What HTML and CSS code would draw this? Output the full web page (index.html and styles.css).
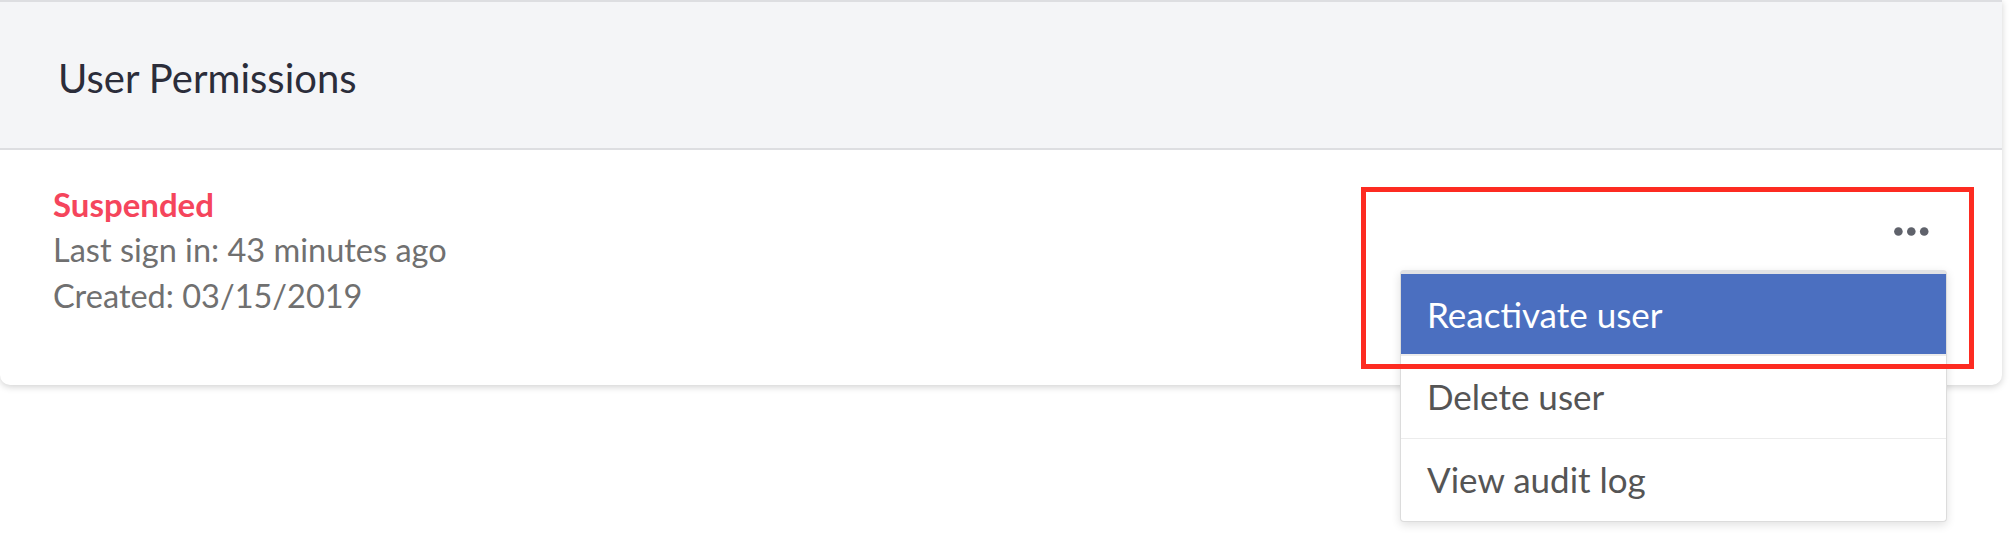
FILE: index.html
```html
<!DOCTYPE html>
<html lang="en">
<head>
    <meta charset="UTF-8">
    <meta name="viewport" content="width=device-width, initial-scale=1.0">
    <title>User Permissions</title>
    <link rel="stylesheet" href="styles.css">
</head>
<body>

    <div class="card">
        <div class="card-header">
            <h2>User Permissions</h2>
        </div>
        <div class="card-body">
            <div class="user-status">
                <div class="status-suspended">Suspended</div>
                <div class="meta">Last sign in: 43 minutes ago</div>
                <div class="meta">Created: 03/15/2019</div>
            </div>
            <div class="actions">
                <button class="more-btn" type="button" aria-label="More actions">
                    <svg width="35" height="9" viewBox="0 0 35 9">
                        <circle cx="4.4" cy="4.5" r="4.3" fill="#5f626b"/>
                        <circle cx="17.3" cy="4.5" r="4.3" fill="#5f626b"/>
                        <circle cx="30.2" cy="4.5" r="4.3" fill="#5f626b"/>
                    </svg>
                </button>
                <ul class="dropdown">
                    <li class="dropdown-item active">Reactivate user</li>
                    <li class="dropdown-item">Delete user</li>
                    <li class="dropdown-item">View audit log</li>
                </ul>
                <!-- annotation box around the toggle and first item -->
                <div class="highlight"></div>
            </div>
        </div>
    </div>

</body>
</html>
```

FILE: styles.css
```css
html {
    height: 100%;
}
body {
    font-family: Lato, "Open Sans", sans-serif;
    margin: 0;
    padding: 0;
    min-height: 540px;
    background-color: #ffffff;
}
.card {
    position: relative;
    width: 2002px;
    background-color: #ffffff;
    border-radius: 0 0 10px 10px;
    box-shadow: 0 2px 7px rgba(0, 0, 0, 0.18);
}
.card-header {
    background-color: #f4f5f7;
    border-top: 2px solid #dddee1;
    border-bottom: 2px solid #dddee1;
    padding: 52px 55px 46px 58px;
}
.card-header h2 {
    margin: 0;
    font-size: 40px;
    line-height: 48px;
    font-weight: 400;
    color: #2b2d3a;
}
.card-body {
    display: flex;
    justify-content: space-between;
    align-items: flex-start;
    padding: 31px 55px 66px 53px;
}
.user-status {
    font-size: 32.5px;
    line-height: 46px;
}
.status-suspended {
    color: #f5455c;
    font-weight: 700;
    font-size: 33px;
}
.meta {
    color: #707070;
}
.actions {
    position: relative;
    width: 547px;
    display: flex;
    justify-content: flex-end;
}
.more-btn {
    margin: 38px 18px 0 0;
    padding: 0;
    height: 24px;
    border: none;
    background: none;
    display: flex;
    align-items: center;
}
.dropdown {
    position: absolute;
    top: 89px;
    left: 0;
    right: 0;
    margin: 0;
    padding: 0;
    list-style: none;
    background-color: #ffffff;
    border: 1px solid #dcdcdc;
    border-top: 4px solid #e1e2e5;
    border-radius: 4px;
    box-shadow: 0 3px 10px rgba(0, 0, 0, 0.12);
    z-index: 2;
}
.dropdown-item {
    font-size: 35px;
    line-height: 42px;
    padding: 19px 26px 21px;
    color: #555555;
    border-bottom: 1px solid #ececec;
}
.dropdown-item:last-child {
    border-bottom: none;
}
.dropdown-item.active {
    background-color: #4b6fc0;
    color: #ffffff;
    padding: 19px 26px 19px;
    border-bottom: 2px solid #ececec;
}
.highlight {
    position: absolute;
    top: 6px;
    left: -39px;
    width: 603px;
    height: 172px;
    border: 5px solid #fd2b21;
    z-index: 3;
    pointer-events: none;
}
```
